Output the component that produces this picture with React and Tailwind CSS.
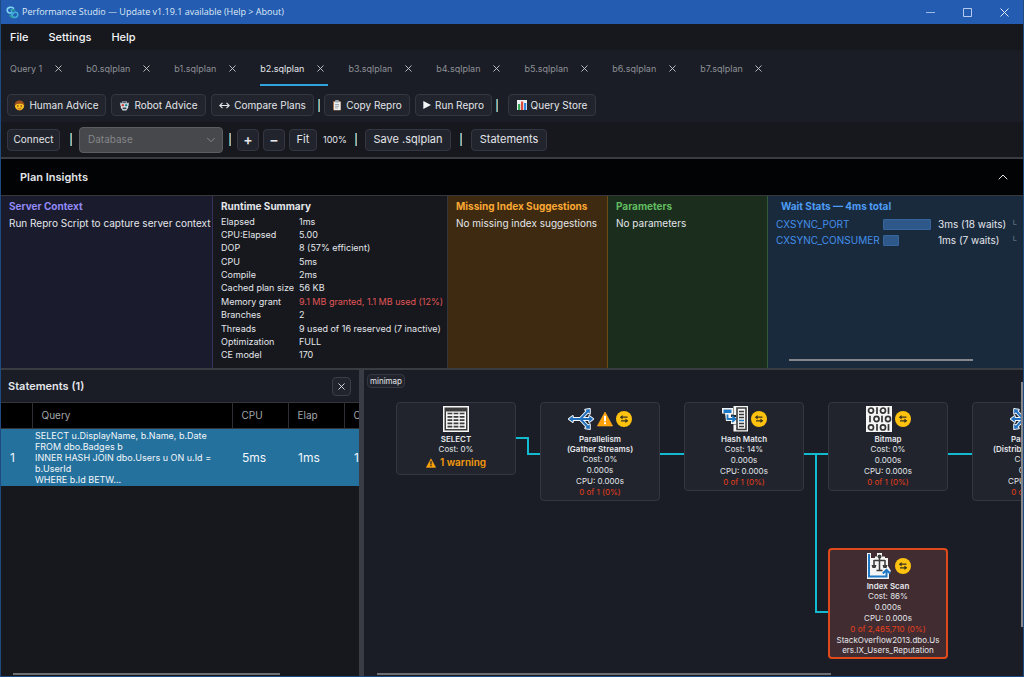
import { useState } from 'react';
import { X, ChevronDown, ChevronUp } from 'lucide-react';

const TABS = ['Query 1', 'b0.sqlplan', 'b1.sqlplan', 'b2.sqlplan', 'b3.sqlplan', 'b4.sqlplan', 'b5.sqlplan', 'b6.sqlplan', 'b7.sqlplan'];

const RUNTIME = [
  ['Elapsed', '1ms'],
  ['CPU:Elapsed', '5.00'],
  ['DOP', '8 (57% efficient)'],
  ['CPU', '5ms'],
  ['Compile', '2ms'],
  ['Cached plan size', '56 KB'],
  ['Memory grant', '9.1 MB granted, 1.1 MB used (12%)', true],
  ['Branches', '2'],
  ['Threads', '9 used of 16 reserved (7 inactive)'],
  ['Optimization', 'FULL'],
  ['CE model', '170'],
];

const WAITS = [
  { name: 'CXSYNC_PORT', ms: 3, text: '3ms (18 waits)' },
  { name: 'CXSYNC_CONSUMER', ms: 1, text: '1ms (7 waits)' },
];

const NODES = [
  { x: 32, y: 32, h: 73, icon: 'table', title: ['SELECT'], lines: ['Cost: 0%'], warning: '1 warning' },
  { x: 176, y: 32, h: 99, icon: 'gather', alert: true, parallel: true, title: ['Parallelism', '(Gather Streams)'], lines: ['Cost: 0%', '0.000s', 'CPU: 0.000s'], rows: '0 of 1 (0%)' },
  { x: 320, y: 32, h: 89, icon: 'hash', parallel: true, title: ['Hash Match'], lines: ['Cost: 14%', '0.000s', 'CPU: 0.000s'], rows: '0 of 1 (0%)' },
  { x: 464, y: 32, h: 89, icon: 'bitmap', parallel: true, title: ['Bitmap'], lines: ['Cost: 0%', '0.000s', 'CPU: 0.000s'], rows: '0 of 1 (0%)' },
  { x: 608, y: 32, h: 99, icon: 'distribute', parallel: true, title: ['Parallelism', '(Distribute Streams)'], lines: ['Cost: 0%', '0.000s', 'CPU: 0.000s'], rows: '0 of 1 (0%)' },
  { x: 464, y: 178, h: 111, icon: 'scan', parallel: true, hot: true, title: ['Index Scan'], lines: ['Cost: 86%', '0.000s', 'CPU: 0.000s'], rows: '0 of 2,465,710 (0%)', object: 'StackOverflow2013.dbo.Users.IX_Users_Reputation' },
];

/* ---------- icons ---------- */

function LogoIcon() {
  return (
    <svg width="13" height="13" viewBox="0 0 13 13" fill="none" strokeWidth="1.6" strokeLinecap="round">
      <path d="M7.5 2.2C5.5.6 1.2 1 1.2 4.2c0 2.6 2.6 3.2 4.8 2.6" stroke="#7fd4f5" />
      <path d="M5.5 3.6v3.2c0 3.4 2.2 4.9 4.2 4.6 2.6-.4 2.8-4.6.4-5.2-1.4-.3-2.4.6-3 1.6" stroke="#41b0d8" />
      <path d="M5.5 4h3M4 9.5c.6 1.2 1.5 2 3 2.2" stroke="#2fa39a" />
    </svg>
  );
}

function HumanIcon() {
  return (
    <svg width="11" height="11" viewBox="0 0 12 12">
      <circle cx="6" cy="6.4" r="5" fill="#fbbf24" />
      <path d="M.8 6.5C.3 2.5 3 .5 6 .5s5.7 2 5.2 6C10.5 4.5 9 4 7.5 4 5.500 4 2 3.800.8 6.5z" fill="#9a4f1d" />
      <circle cx="4.2" cy="6.6" r=".8" fill="#4a2a12" />
      <circle cx="7.8" cy="6.6" r=".8" fill="#4a2a12" />
      <path d="M4 9c1.2 1 2.8 1 4 0" stroke="#a3431a" fill="none" />
    </svg>
  );
}

function RobotIcon() {
  return (
    <svg width="11" height="11" viewBox="0 0 12 12">
      <path d="M1 2.500L2.500 3.500 4 1h4l1.500 2.500L11 2.500l-.5 4h-9z" fill="#aab6bf" />
      <path d="M2 4h8v4.5L8 11.500H4L2 8.5z" fill="#d8e0e5" />
      <path d="M4 1.500h4v1.700H4z" fill="#4b5563" />
      <circle cx="4.2" cy="5.600" r="1.300" fill="#d63a3a" />
      <circle cx="7.8" cy="5.600" r="1.300" fill="#1d8a95" />
      <path d="M4 8.2h4v1.800H4z" fill="#33414c" />
    </svg>
  );
}

function ClipboardIcon() {
  return (
    <svg width="10" height="11" viewBox="0 0 10 11">
      <rect x="1" y="1" width="8" height="9.5" rx="1" fill="#a8714a" />
      <rect x="2" y="2" width="6.5" height="8" fill="#eceff1" />
      <rect x="3" y="0" width="4" height="2.5" rx=".8" fill="#9aa5ad" />
      <path d="M3 4.5h4M3 6.2h4M3 7.9h3" stroke="#8c979f" strokeWidth=".8" />
    </svg>
  );
}

function ChartIcon() {
  return (
    <svg width="10" height="10" viewBox="0 0 10 10">
      <path d="M0 0h10v10H0z" fill="#eceff1" />
      <path d="M1 4h2.2v6H1z" fill="#35a853" />
      <path d="M4 1.5h2.2V10H4z" fill="#e2483d" />
      <path d="M7 3h2.2v7H7z" fill="#2f86e0" />
    </svg>
  );
}

function ArrowsIcon() {
  return (
    <svg width="11" height="7" viewBox="0 0 11 7" fill="none" stroke="currentColor" strokeWidth="1.1">
      <path d="M1 3.5h9M3.500.8L.8 3.5l2.7 2.7M7.500.8l2.7 2.7-2.7 2.7" />
    </svg>
  );
}

function PlayIcon() {
  return (
    <svg width="8" height="8" viewBox="0 0 8 8">
      <path d="M.3 0L8 4 .3 8z" fill="#f3f4f6" />
    </svg>
  );
}

function AlertIcon({ size }) {
  return (
    <svg width={size} height={size} viewBox="0 0 16 16">
      <path d="M8 1l7.6 14H.4z" fill="#ffa000" stroke="#ffb12e" strokeWidth=".6" strokeLinejoin="round" />
      <path d="M7 4.800h2v5.400H7zM7 11.300h2v2H7z" fill={size > 12 ? '#fff' : '#22252d'} />
    </svg>
  );
}

function ParallelBadge() {
  return (
    <svg width="16" height="16" viewBox="0 0 16 16">
      <circle cx="8" cy="8" r="8" fill="#ffc20e" />
      <path d="M5 6.200h6.500M5 9.800h6.500" stroke="#3a3320" strokeWidth="1.300" />
      <path d="M3.800 6.200l2.800-2.200v4.400zM12.200 9.800L9.400 7.600V12z" fill="#3a3320" />
    </svg>
  );
}

const STREAMS = 'M3 13h20M12.500 13L20 5M12.500 13l7.500 8';
const STREAM_HEADS = 'M.8 13l4-3v6zM25.200 13l-4-3v6zM21.800 3v4.800l-4.600-4zM21.800 23v-4.800l-4.600 4z';

function OperatorIcon({ name }) {
  if (name === 'table') {
    return (
      <svg width="26" height="26" viewBox="0 0 26 26">
        <path d="M0 0h26v26H0z" fill="#f5f5f5" />
        <path d="M1.5 1.5h23v23h-23z" fill="#3b3b3b" />
        <path d="M3 5.5h20V23H3z" fill="#f5f5f5" />
        {[6.5, 9.8, 13.1, 16.4, 19.7].map((y) => (
          <path key={y} d={`M4.5 ${y + 1}h4.8M10.6 ${y + 1}h4.8M16.7 ${y + 1}h4.8`} stroke="#3b3b3b" strokeWidth="1.7" />
        ))}
      </svg>
    );
  }
  if (name === 'gather' || name === 'distribute') {
    return (
      <svg width="26" height="26" viewBox="0 0 26 26" fill="none">
        <g transform={name === 'distribute' ? 'translate(26 0) scale(-1 1)' : undefined}>
          <path d={STREAMS} stroke="#eef4fa" strokeWidth="4" />
          <path d={STREAM_HEADS} fill="#eef4fa" stroke="#eef4fa" strokeWidth="2" strokeLinejoin="round" />
          <path d={STREAMS} stroke="#1f6fbd" strokeWidth="1.9" />
          <path d={STREAM_HEADS} fill="#1f6fbd" />
        </g>
      </svg>
    );
  }
  if (name === 'hash') {
    return (
      <svg width="26" height="26" viewBox="0 0 26 26" fill="none">
        <path d="M0 2h11v6.5H6v-1H0zM3 7h6v4h5v7H9v-3H4zM11.5 0H26v25.5H11.5v-7H14V9h-2.5z" fill="#f5f5f5" />
        <path d="M1.5 3.5h8v3.5h-8z" fill="#1f78c4" />
        <path d="M5.5 8.5v4.5h6.5M10 10l3.5 3-3.5 3" stroke="#1f78c4" strokeWidth="1.8" />
        <path d="M15 2h9v21.5h-9z" stroke="#3b3b3b" strokeWidth="1.6" />
        <path d="M17 5.5h5M17 8.5h5M17 11.5h5M17 17.5h5M17 20.5h5" stroke="#3b3b3b" strokeWidth="1.5" />
        <path d="M17 14.5h5" stroke="#1f78c4" strokeWidth="1.5" />
      </svg>
    );
  }
  if (name === 'bitmap') {
    const dots = [[5, 4.6], [17, 4.6], [10.5, 13], [22, 13], [5, 21.4], [17, 21.4]];
    const bars = [[11, 4.6], [22.5, 4.6], [4, 13], [16, 13], [11, 21.4], [22.5, 21.4]];
    return (
      <svg width="26" height="26" viewBox="0 0 26 26" fill="none" stroke="#333" strokeWidth="1.7">
        <path d="M0 0h26v26H0z" fill="#f5f5f5" stroke="none" />
        {dots.map(([x, y]) => <ellipse key={`${x}-${y}`} cx={x} cy={y} rx="2.5" ry="2.6" />)}
        {bars.map(([x, y]) => <path key={`${x}-${y}`} d={`M${x} ${y - 3.3}v6.6`} />)}
      </svg>
    );
  }
  return (
    <svg width="26" height="26" viewBox="0 0 26 26" fill="none">
      <path d="M1 0h4v5h4V3.500h2V0h5v3.500h3V5h3v8l3 5-2 2v6H1z" fill="#f5f5f5" />
      <path d="M3 1v22.5h17.500V18M16.800 20.500l3.700-3.500 3.700 3.500" stroke="#1f78c4" strokeWidth="2" />
      <path d="M13.500 4v14M8 7.500h11M8 7v5M19 7v5M10.500 17.500h6" stroke="#3b3b3b" strokeWidth="1.500" />
      <path d="M5.500 12h5l-1 3h-3zM16.500 12h5l-1 3h-3z" fill="#3b3b3b" />
      <circle cx="13.500" cy="3.500" r="2" fill="#3b3b3b" />
    </svg>
  );
}

/* ---------- small pieces ---------- */

function ToolButton({ children, className = '', ...rest }) {
  return (
    <button
      className={`flex h-[22px] shrink-0 items-center justify-center gap-1 whitespace-nowrap rounded border border-[#343741] bg-[#21242c] text-[#e4e6eb] ${className}`}
      {...rest}
    >
      {children}
    </button>
  );
}

function Divider({ className = '' }) {
  return <span className={`h-[13px] w-[2px] shrink-0 border-l border-r border-l-[#4f9fae] border-r-[#b3aa88] ${className}`} />;
}

function Panel({ title, className, children }) {
  return (
    <section className={`min-w-0 overflow-hidden pt-1 ${className}`}>
      <h3 className="text-[10px] leading-[13px] font-bold">{title}</h3>
      {children}
    </section>
  );
}

function PlanNode({ node }) {
  return (
    <article
      className={`absolute flex w-[120px] flex-col items-center rounded text-center text-[8px] text-[#e4e6eb] ${
        node.hot ? 'border-2 border-[#e04a1a] bg-[#412d31] pt-[3px]' : 'border border-[#343741] bg-[#21242c] pt-[3px]'
      }`}
      style={{ left: node.x, top: node.y, height: node.h }}
    >
      <div className="flex items-center justify-center gap-[3px]">
        <OperatorIcon name={node.icon} />
        {node.alert && <AlertIcon size={16} />}
        {node.parallel && <ParallelBadge />}
      </div>
      <h4 className="mt-[2px] whitespace-nowrap font-semibold leading-[10px]">
        {node.title.map((t) => <span key={t} className="block">{t}</span>)}
      </h4>
      <div className="leading-[11px]">
        {node.lines.map((l) => <p key={l}>{l}</p>)}
        {node.rows && <p className="text-[#e63e1c]">{node.rows}</p>}
      </div>
      {node.warning && (
        <p className="mt-px flex items-center gap-1 text-[10px] font-semibold leading-[13px] text-[#f59a0c]">
          <AlertIcon size={10} /> {node.warning}
        </p>
      )}
      {node.object && <p className="w-[106px] break-all leading-[10px]">{node.object}</p>}
    </article>
  );
}

/* ---------- page ---------- */

export default function App() {
  const [active, setActive] = useState('b2.sqlplan');

  return (
    <div className="flex h-screen flex-col overflow-hidden border-x border-b border-[#1f4a80] bg-[#16181d] font-['Inter',sans-serif] text-[#e4e6eb]">
      <header className="flex h-6 shrink-0 items-center bg-[#235cb0] pl-[5px] text-[#dfe9f7]">
        <LogoIcon />
        <h1 className="ml-[3px] flex-1 font-['Open_Sans',sans-serif] text-[9px]">Performance Studio — Update v1.19.1 available (Help &gt; About)</h1>
        <button aria-label="Minimize" className="flex w-[37px] justify-center">
          <svg width="9" height="9" viewBox="0 0 9 9"><path d="M0 4.5h9" stroke="#9dbbe6" /></svg>
        </button>
        <button aria-label="Maximize" className="flex w-[37px] justify-center">
          <svg width="9" height="9" viewBox="0 0 9 9" fill="none"><path d="M.5.5h8v8h-8z" stroke="#b4cbec" /></svg>
        </button>
        <button aria-label="Close" className="flex w-[37px] justify-center">
          <svg width="9" height="9" viewBox="0 0 9 9"><path d="M.5.5l8 8M8.500.5l-8 8" stroke="currentColor" /></svg>
        </button>
      </header>

      <nav className="flex h-[26px] shrink-0 items-center gap-5 pl-[9px] text-[11px] font-medium text-[#f3f4f6]">
        <button>File</button>
        <button>Settings</button>
        <button>Help</button>
      </nav>

      <div className="shrink-0 bg-[#1a1d25]">
        <div className="flex h-9 gap-5 pl-[9px]">
          {TABS.map((tab) => (
            <div
              key={tab}
              className={`flex items-center border-b-2 pt-[3px] text-[9px] ${tab === active ? 'border-[#2ea3dc] text-[#e4e6eb]' : 'border-transparent text-[#8d9097]'}`}
            >
              <button onClick={() => setActive(tab)}>{tab}</button>
              <button aria-label={`Close ${tab}`} className="ml-2 flex w-4 justify-center text-[#c6c8cd]">
                <X size={11} strokeWidth={2} />
              </button>
            </div>
          ))}
        </div>
        <div className="flex h-9 items-center pt-[2px] pl-[6px] text-[10px]">
          <ToolButton className="w-[99px]"><HumanIcon />Human Advice</ToolButton>
          <ToolButton className="ml-[5px] w-[95px]"><RobotIcon />Robot Advice</ToolButton>
          <ToolButton className="ml-[5px] w-[103px]"><ArrowsIcon />Compare Plans</ToolButton>
          <Divider className="mx-1" />
          <ToolButton className="w-[86px]"><ClipboardIcon />Copy Repro</ToolButton>
          <ToolButton className="ml-[5px] w-[77px]"><PlayIcon />Run Repro</ToolButton>
          <Divider className="ml-1 mr-[10px]" />
          <ToolButton className="w-[88px]"><ChartIcon />Query Store</ToolButton>
        </div>
      </div>

      <div className="flex h-[35px] shrink-0 items-center pl-[6px] text-[11px]">
        <ToolButton className="w-[53px] text-[10px]">Connect</ToolButton>
        <Divider className="ml-[10px] mr-[7px]" />
        <div className="relative w-[144px] shrink-0">
          <select aria-label="Database" disabled className="block h-[26px] w-full appearance-none rounded-sm border border-[#5c5d60] bg-[#47484b] px-2 text-[10px] text-[#85868a] opacity-100">
            <option>Database</option>
          </select>
          <ChevronDown size={14} strokeWidth={1.5} className="pointer-events-none absolute top-[6px] right-[5px] text-[#8d8e92]" />
        </div>
        <Divider className="mx-[6px]" />
        <ToolButton aria-label="Zoom in" className="w-[22px] text-[14px] font-semibold">+</ToolButton>
        <ToolButton aria-label="Zoom out" className="ml-1 w-[22px] text-[14px] font-semibold">−</ToolButton>
        <ToolButton className="ml-1 w-[28px]">Fit</ToolButton>
        <span className="ml-[6px] w-6 text-[9px]">100%</span>
        <Divider className="mx-[8px]" />
        <ToolButton className="w-[86px]">Save .sqlplan</ToolButton>
        <Divider className="mx-[9px]" />
        <ToolButton className="w-[76px]">Statements</ToolButton>
      </div>

      <section className="shrink-0 border-y-2 border-[#3a3c42]">
        <div className="flex h-[37px] items-center justify-between border-b border-[#36383d] bg-[#020304] pl-[19px] pr-3">
          <h2 className="text-[11px] font-semibold">Plan Insights</h2>
          <button aria-label="Collapse insights"><ChevronUp size={16} strokeWidth={1.5} /></button>
        </div>
        <div className="grid h-[172px] grid-cols-[212px_235px_160px_160px_minmax(0,1fr)] text-[10px]">
          <Panel title={<span className="text-[#9089f5]">Server Context</span>} className="border-r border-[#35335c] bg-[#1a1b2c] pl-2">
            <p className="mt-1 whitespace-nowrap leading-[13px]">Run Repro Script to capture server context</p>
          </Panel>
          <Panel title="Runtime Summary" className="border-r border-[#34363c] pl-2">
            <dl className="mt-[2px] grid h-[147px] auto-rows-fr grid-cols-[78px_1fr] items-center whitespace-nowrap text-[9px] leading-[12px]">
              {RUNTIME.map(([label, value, bad]) => (
                <div key={label} className="contents">
                  <dt>{label}</dt>
                  <dd className={bad ? 'text-[#e05656]' : ''}>{value}</dd>
                </div>
              ))}
            </dl>
          </Panel>
          <Panel title={<span className="text-[#fba834]">Missing Index Suggestions</span>} className="border-r border-[#6a4d16] bg-[#3d2a10] pl-2">
            <p className="mt-1 whitespace-nowrap leading-[13px]">No missing index suggestions</p>
          </Panel>
          <Panel title={<span className="text-[#62bd62]">Parameters</span>} className="border-r border-[#36583a] bg-[#1b2d1c] pl-2">
            <p className="mt-1 leading-[13px]">No parameters</p>
          </Panel>
          <Panel title={<span className="pl-[5px] text-[#4d9cf5]">Wait Stats — 4ms total</span>} className="relative bg-[#1a2a3d] pl-2">
            <ul className="mt-[3px]">
              {WAITS.map((w) => (
                <li key={w.name} className="flex h-[16px] items-center whitespace-nowrap">
                  <span className="w-[107px] shrink-0 text-[#4390ea]">{w.name}</span>
                  <span className="w-[55px] shrink-0">
                    <span className="block h-[11px] rounded-[1px] border border-[#35659c] bg-[#2f588a]" style={{ width: w.ms * 16 }} />
                  </span>
                  <span className="flex-1">{w.text}</span>
                  <span className="w-3 shrink-0 text-[8px] text-[#7f8996]">└</span>
                </li>
              ))}
            </ul>
            <div className="absolute right-[50px] bottom-[7px] left-[21px] h-[2px] bg-[#84888d]" />
          </Panel>
        </div>
      </section>

      <main className="flex min-h-0 flex-1">
        <aside className="relative w-[358px] shrink-0 overflow-hidden">
          <div className="flex h-8 items-center justify-between bg-[#1a1d25] pl-[7px] pr-2">
            <h2 className="text-[11px] font-semibold">Statements (1)</h2>
            <button aria-label="Close statements" className="flex size-[19px] items-center justify-center rounded border border-[#3b3e47] bg-[#21242c]">
              <X size={11} strokeWidth={2} />
            </button>
          </div>
          <table className="w-[398px] table-fixed border-collapse text-left">
            <colgroup>
              <col className="w-[31px]" />
              <col className="w-[200px]" />
              <col className="w-[56px]" />
              <col className="w-[56px]" />
              <col />
            </colgroup>
            <thead>
              <tr className="h-[26px] border-y border-[#33353a] bg-black text-[10px] text-[#a3a5aa]">
                <th className="border-r border-[#2c2e33]" aria-label="Number" />
                <th className="border-r border-[#2c2e33] pl-[9px] font-normal">Query</th>
                <th className="border-r border-[#2c2e33] pl-[9px] font-normal">CPU</th>
                <th className="border-r border-[#2c2e33] pl-[9px] font-normal">Elap</th>
                <th className="pl-[9px] font-normal">Cost</th>
              </tr>
            </thead>
            <tbody>
              <tr className="h-[57px] bg-[#24719d] text-[12px] text-[#f3f7fa]">
                <td className="pl-[9px]">1</td>
                <td className="py-px pl-[3px] text-[9px] leading-[11px] whitespace-pre-line">
                  {'SELECT u.DisplayName, b.Name, b.Date\nFROM dbo.Badges b\nINNER HASH JOIN dbo.Users u ON u.Id = b.UserId\nWHERE b.Id BETW...'}
                </td>
                <td className="pl-[10px]">5ms</td>
                <td className="pl-[10px]">1ms</td>
                <td className="pl-[10px]">100%</td>
              </tr>
            </tbody>
          </table>
          <div className="absolute bottom-[1px] left-3 h-[2px] w-[267px] bg-[#6d6f72]" />
        </aside>

        <div className="w-[5px] shrink-0 bg-[#3a3c45]" />

        <section aria-label="Execution plan" className="relative min-w-0 flex-1 overflow-hidden bg-[#1a1d25]">
          <button className="absolute top-1 left-[3px] flex h-[14px] w-[38px] items-center justify-center rounded-[4px] border border-[#343741] bg-[#21242c] text-[8px]">minimap</button>
          <svg className="absolute top-0 left-0" width="660" height="300" viewBox="0 0 660 300" fill="none" stroke="#12b9cf" strokeWidth="2">
            <path d="M152 68h12v16h12" />
            <path d="M296 84h24M440 84h24M452 84v158h12M584 84h24" />
          </svg>
          {NODES.map((node) => <PlanNode key={`${node.x}-${node.y}`} node={node} />)}
          <div className="absolute bottom-[1px] left-[13px] h-[2px] w-[454px] bg-[#6d6f72]" />
          <div className="absolute top-[12px] right-0 h-[245px] w-[2px] bg-[#84868a]" />
        </section>
      </main>
    </div>
  );
}
